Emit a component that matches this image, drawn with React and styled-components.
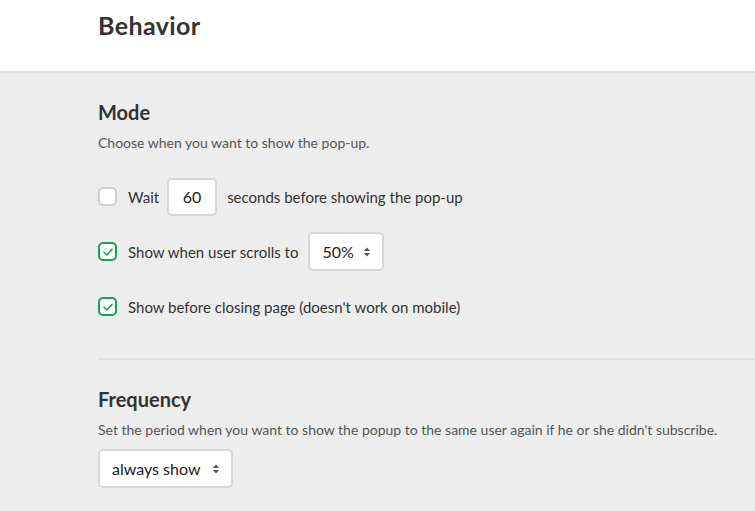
import styled, { createGlobalStyle } from "styled-components";
import { useState } from "react";

const GlobalStyle = createGlobalStyle`
  html, body {
    margin: 0;
    padding: 0;
    background: #ededed;
  }
  body {
    font-family: "Lato", "Liberation Sans", sans-serif;
    color: #333;
    overflow: hidden;
  }
`;

function Check({ checked, onClick }) {
  return (
    <Box checked={checked} onClick={onClick}>
      {checked && (
        <svg width="12" height="12" viewBox="0 0 12 12">
          <path
            d="M2 6.2 L4.8 9 L10 3.4"
            fill="none"
            stroke="#17a25b"
            strokeWidth="1.6"
            strokeLinecap="round"
            strokeLinejoin="round"
          />
        </svg>
      )}
    </Box>
  );
}

function Arrows() {
  return (
    <svg width="8" height="12" viewBox="0 0 8 12">
      <path d="M4 1.5 L7.2 5 H0.8 Z" fill="#555" />
      <path d="M4 10.5 L7.2 7 H0.8 Z" fill="#555" />
    </svg>
  );
}

function App() {
  const [wait, setWait] = useState(false);
  const [scroll, setScroll] = useState(true);
  const [closing, setClosing] = useState(true);

  return (
    <>
      <GlobalStyle />
      <Header>
        <PageTitle>Behavior</PageTitle>
      </Header>
      <Main>
        <Section>
          <Heading>Mode</Heading>
          <Hint>Choose when you want to show the pop-up.</Hint>
          <Options>
            <Row>
              <Check checked={wait} onClick={() => setWait(!wait)} />
              <Label>Wait</Label>
              <NumberBox>60</NumberBox>
              <Label>seconds before showing the pop-up</Label>
            </Row>
            <Row>
              <Check checked={scroll} onClick={() => setScroll(!scroll)} />
              <Label>Show when user scrolls to</Label>
              <Select width="76px">
                50%
                <Arrows />
              </Select>
            </Row>
            <Row>
              <Check checked={closing} onClick={() => setClosing(!closing)} />
              <Label>Show before closing page (doesn't work on mobile)</Label>
            </Row>
          </Options>
        </Section>
        <Divider />
        <Section>
          <Heading>Frequency</Heading>
          <Hint>
            Set the period when you want to show the popup to the same user
            again if he or she didn't subscribe.
          </Hint>
          <Select width="135px" spaced>
            always show
            <Arrows />
          </Select>
        </Section>
      </Main>
    </>
  );
}

export default App;

const Header = styled.header`
  height: 73px;
  background: #fff;
  border-bottom: 2px solid #e0e0e0;
  padding-left: 98px;
  box-sizing: border-box;
`;

const PageTitle = styled.h1`
  margin: 0;
  padding-top: 10px;
  font-size: 25px;
  letter-spacing: 0.4px;
  font-weight: 700;
  color: #333;
  line-height: 30px;
`;

const Main = styled.main`
  padding-left: 98px;
  padding-top: 27px;
  min-height: 440px;
`;

const Section = styled.section`
  display: flex;
  flex-direction: column;
  align-items: flex-start;
`;

const Heading = styled.h2`
  margin: 0;
  font-size: 20px;
  font-weight: 700;
  line-height: 24px;
  color: #333;
`;

const Hint = styled.p`
  margin: 10px 0 0;
  font-size: 14px;
  line-height: 17px;
  color: #555;
`;

const Options = styled.div`
  display: flex;
  flex-direction: column;
  gap: 16px;
  margin-top: 26px;
`;

const Row = styled.div`
  display: flex;
  align-items: center;
  gap: 10px;
  height: 39px;
`;

const Box = styled.div`
  width: 19px;
  height: 19px;
  box-sizing: border-box;
  border-radius: 5px;
  background: #fff;
  border: 2px solid ${(p) => (p.checked ? "#17a25b" : "#cfcfcf")};
  display: flex;
  align-items: center;
  justify-content: center;
  cursor: pointer;
  margin-right: 1px;
`;

const Label = styled.span`
  font-size: 15px;
  color: #333;
`;

const NumberBox = styled.div`
  width: 50px;
  height: 38px;
  box-sizing: border-box;
  border: 2px solid #d6d6d6;
  border-radius: 5px;
  background: #fff;
  display: flex;
  align-items: center;
  justify-content: center;
  font-size: 16px;
  color: #222;
  margin-left: -2px;
`;

const Select = styled.div`
  width: ${(p) => p.width};
  height: 39px;
  box-sizing: border-box;
  border: 2px solid #d6d6d6;
  border-radius: 5px;
  background: #fff;
  display: flex;
  align-items: center;
  justify-content: space-between;
  padding: 0 11px 0 12px;
  margin-top: ${(p) => (p.spaced ? "11px" : "0")};
  font-size: 16px;
  color: #222;
  cursor: pointer;
`;

const Divider = styled.hr`
  border: none;
  height: 2px;
  background: #e2e2e2;
  margin: 32px 0 27px;
`;
